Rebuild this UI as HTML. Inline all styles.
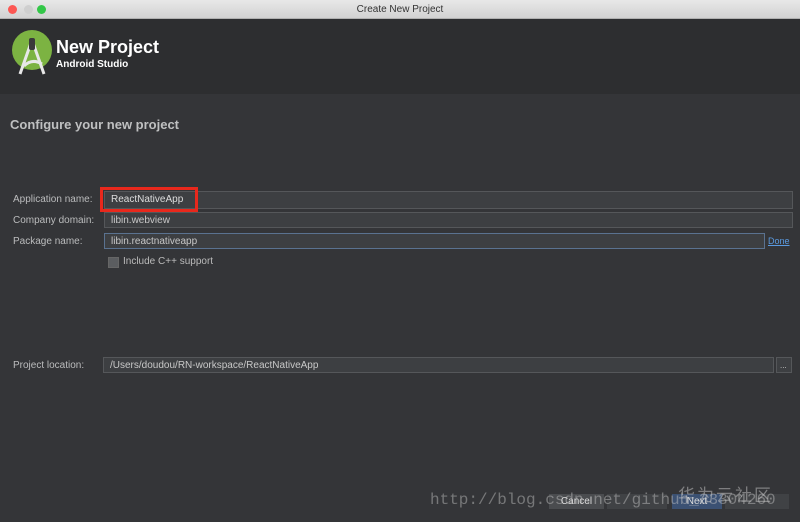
<!DOCTYPE html>
<html><head><style>
body{margin:0;width:800px;height:522px;overflow:hidden;background:#343538;font-family:"Liberation Sans",sans-serif;position:relative}
.a{position:absolute}
.tb{left:0;top:0;width:800px;height:18px;background:linear-gradient(#e8e8e8,#d2d2d2);border-bottom:1px solid #b0b0b0}
.hd{left:0;top:19px;width:800px;height:75px;background:#2d2e30}
.lbl{font-size:10px;color:#bbbcbd;left:13px}
.fld{height:16px;background:#3d3f42;border:1px solid #55575a;font-size:10px;color:#c8c8c8;line-height:16px;padding-left:6px;box-sizing:border-box}
</style></head><body>
<div class="a tb"></div>
<div class="a" style="left:8px;top:5px;width:9px;height:9px;border-radius:50%;background:#fc5753"></div>
<div class="a" style="left:24px;top:5px;width:9px;height:9px;border-radius:50%;background:#cfcfcf"></div>
<div class="a" style="left:37px;top:5px;width:9px;height:9px;border-radius:50%;background:#33c748"></div>
<div class="a" style="left:0;top:4px;width:800px;text-align:center;font-size:10px;color:#333">Create New Project</div>
<div class="a hd"></div>
<svg class="a" style="left:10px;top:30px" width="44" height="48" viewBox="0 0 44 48">
<circle cx="22" cy="20" r="20" fill="#7cb342"/>
<path d="M22 10 L10 44 M22 10 L34 44 M14 36 Q22 28 32 34" stroke="#e8e8e8" stroke-width="3" fill="none"/>
<rect x="19" y="8" width="6" height="12" rx="2" fill="#3a3a3a"/>
</svg>
<div class="a" style="left:56px;top:37px;font-size:18px;font-weight:bold;color:#fff">New Project</div>
<div class="a" style="left:56px;top:59px;font-size:10px;font-weight:bold;color:#fff">Android Studio</div>
<div class="a" style="left:10px;top:117px;font-size:13px;font-weight:bold;color:#bfc0c1">Configure your new project</div>
<div class="a lbl" style="top:194px">Application name:</div>
<div class="a lbl" style="top:215px">Company domain:</div>
<div class="a lbl" style="top:236px">Package name:</div>
<div class="a lbl" style="top:360px">Project location:</div>
<div class="a fld" style="left:104px;top:191px;width:689px;height:18px"></div>
<div class="a fld" style="left:104px;top:212px;width:689px">libin.webview</div>
<div class="a fld" style="left:104px;top:233px;width:661px;border-color:#5a7290">libin.reactnativeapp</div>
<div class="a" style="left:100px;top:187px;width:84px;height:19px;border:3px solid #e8281c;font-size:10px;color:#ddd;line-height:19px;padding-left:8px;box-sizing:content-box">ReactNativeApp</div>
<div class="a" style="left:768px;top:236px;font-size:9px;color:#5a9ae0;text-decoration:underline">Done</div>
<div class="a" style="left:108px;top:257px;width:9px;height:9px;background:#5b5d60;border:1px solid #666"></div>
<div class="a" style="left:123px;top:256px;font-size:10px;color:#bbb">Include C++ support</div>
<div class="a fld" style="left:103px;top:357px;width:671px">/Users/doudou/RN-workspace/ReactNativeApp</div>
<div class="a fld" style="left:776px;top:357px;width:16px;font-size:8px;padding-left:3px">...</div>
<div class="a" style="left:549px;top:494px;width:55px;height:15px;background:#4a4c4f;font-size:10px;color:#ddd;text-align:center;line-height:15px">Cancel</div>
<div class="a" style="left:607px;top:494px;width:60px;height:15px;background:#404245"></div>
<div class="a" style="left:672px;top:494px;width:50px;height:15px;background:#3b5173;font-size:10px;color:#ddd;text-align:center;line-height:15px">Next</div>
<div class="a" style="left:725px;top:494px;width:64px;height:15px;background:#404245"></div>
<div class="a" style="left:430px;top:491px;font-family:'Liberation Mono',monospace;font-size:16px;color:rgba(200,200,200,0.45)">http://blog.csdn.net/github_33304260</div>
<div class="a" style="left:678px;top:481px;font-family:'Noto Sans CJK SC',sans-serif;font-size:17px;color:rgba(200,200,200,0.5);letter-spacing:2px">华为云社区</div>
</body></html>
